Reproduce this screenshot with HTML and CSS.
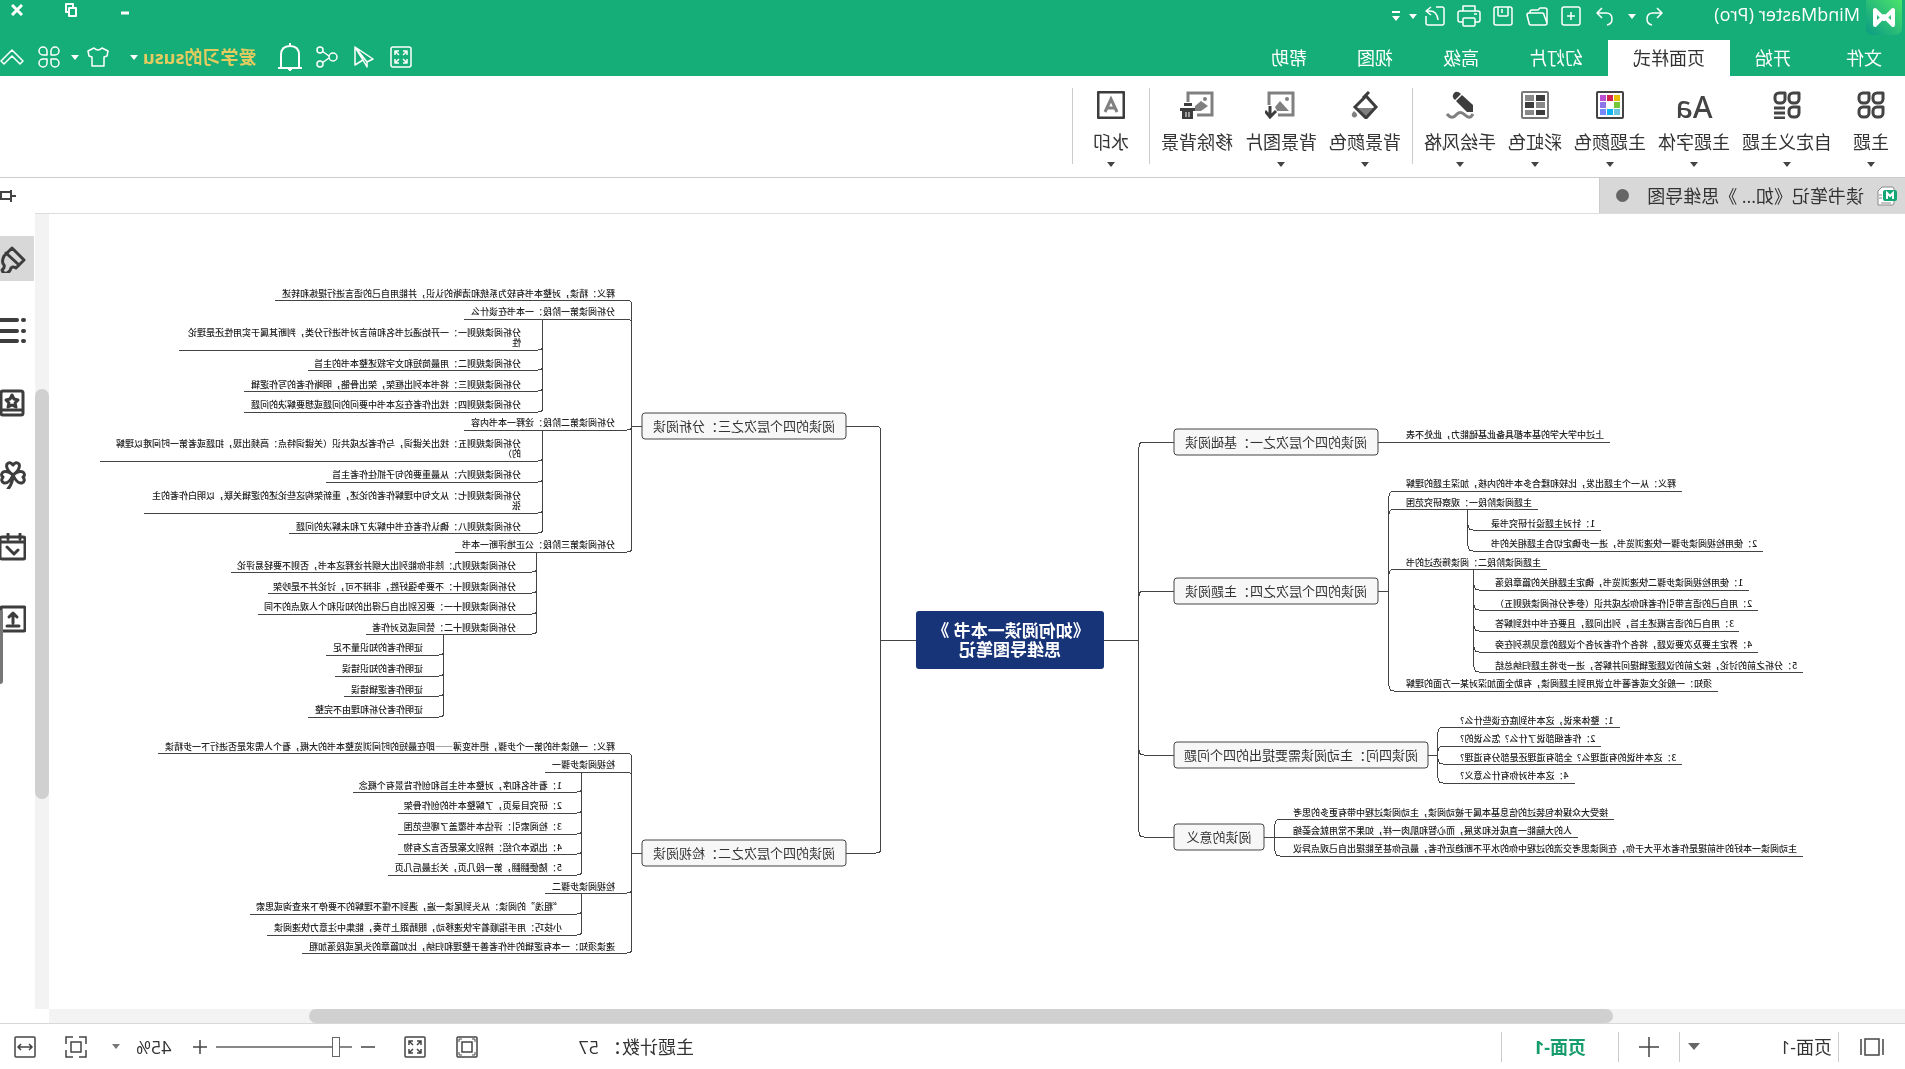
FILE: index.html
```html
<!DOCTYPE html>
<html lang="zh-CN">
<head>
<meta charset="utf-8">
<title>MindMaster (Pro)</title>
<link rel="stylesheet" href="styles.css">
</head>
<body>
<div class="app">
  <header class="header">
    <div class="titlebar">
      <svg class="logo" viewBox="0 0 36 36" aria-hidden="true">
        <defs><linearGradient id="lg" x1="0" y1="0" x2="1" y2="1"><stop offset="0" stop-color="#4be36c"/><stop offset="1" stop-color="#0a9a83"/></linearGradient></defs>
        <path d="M0 0H36V28a7 7 0 0 1-7 7H7a7 7 0 0 1-7-7Z" fill="url(#lg)"/>
        <path class="mark" d="M9 25V10l9 9 9-9v15l-9-9z"/>
      </svg>
      <h1 class="title">MindMaster (Pro)</h1>
      <div class="quick">
        <button class="tool" aria-label="撤销"><svg class="i20" viewBox="0 0 20 20"><path d="M7 2 2 7l5 5M2 7h9q6 0 6 6 0 5-5 6"/></svg></button>
        <button class="caret gap" aria-label="撤销历史"><svg viewBox="0 0 8 5"><path d="M0 0h8L4 5z"/></svg></button>
        <button class="tool" aria-label="重做"><svg class="i20" viewBox="0 0 20 20"><path d="M13 2l5 5-5 5M18 7H9q-6 0-6 6 0 5 5 6"/></svg></button>
        <button class="tool" aria-label="新建"><svg class="i20" viewBox="0 0 20 20"><rect x="1" y="1" width="18" height="18" rx="2"/><path d="M10 6v8M6 10h8"/></svg></button>
        <button class="tool" aria-label="打开"><svg class="i22" viewBox="0 0 22 20"><path d="M1 17V4q0-2 2-2h5l2 2h6q2 0 2 2v1M1 17 4 9q0-2 2-2h13q2 0 2 2l-2 8q0 2-2 2H3q-2 0-2-2Z"/></svg></button>
        <button class="tool" aria-label="保存"><svg class="i20" viewBox="0 0 20 20"><rect x="1" y="1" width="18" height="18" rx="2"/><path d="M5 1v8q0 1 1 1h8q1 0 1-1V1M11 3v4"/></svg></button>
        <button class="tool" aria-label="打印"><svg class="i24" viewBox="0 0 24 22"><path d="M6 6V1h12v5M6 17H3q-2 0-2-2V8q0-2 2-2h18q2 0 2 2v7q0 2-2 2h-3M4 9h3"/><rect x="6" y="13" width="12" height="8" rx="1"/></svg></button>
        <button class="tool" aria-label="导出"><svg class="i20" viewBox="0 0 20 20"><path d="M9 1H3Q1 1 1 3v14q0 2 2 2h14q2 0 2-2v-7M14 1l5 4-5 4M19 5h-4q-7 0-8 9"/></svg></button>
        <button class="caret" aria-label="导出选项"><svg viewBox="0 0 8 5"><path d="M0 0h8L4 5z"/></svg></button>
        <button class="more" aria-label="自定义快速访问"><svg viewBox="0 0 8 10"><path d="M0 0h8v2H0zM0 5h8L4 10z"/></svg></button>
      </div>
      <div class="window">
        <button aria-label="最小化"><svg width="10" height="20" viewBox="0 0 10 20"><path d="M1 13h8" stroke-width="3"/></svg></button>
        <button aria-label="还原"><svg width="12" height="14" viewBox="0 0 12 14"><path d="M1 5h7v8H1zM4 5V1h7v8H8" stroke-width="2"/></svg></button>
        <button aria-label="关闭"><svg width="12" height="12" viewBox="0 0 12 12"><path d="M1 1l10 10M11 1 1 11" stroke-width="3"/></svg></button>
      </div>
    </div>
    <div class="menubar">
      <nav class="tabs">
        <button class="tab first">文件</button>
        <button class="tab">开始</button>
        <button class="tab active">页面样式</button>
        <button class="tab">幻灯片</button>
        <button class="tab">高级</button>
        <button class="tab">视图</button>
        <button class="tab">帮助</button>
      </nav>
      <div class="account">
        <button class="act" aria-label="全屏"><svg class="i22" viewBox="0 0 22 22"><rect x="1" y="1" width="20" height="20" rx="2"/><path d="M9 9 5 5m0 4V5h4M13 9l4-4m-4 0h4v4M9 13l-4 4m0-4v4h4M13 13l4 4m-4 0h4v-4"/></svg></button>
        <button class="act" aria-label="发送"><svg class="i22" viewBox="0 0 22 22"><path d="M20 1 2 13l6 3zM20 1v18l-8-5zM8 16v5l4-7"/></svg></button>
        <button class="act" aria-label="分享"><svg class="i22" viewBox="0 0 22 22"><circle cx="5" cy="11" r="4"/><circle cx="18" cy="4" r="3"/><circle cx="18" cy="18" r="3"/><path d="M9 10l7-5M9 12l7 5"/></svg></button>
        <button class="act" aria-label="通知"><svg class="bell" viewBox="0 0 24 28"><path d="M3 24V12q0-9 9-9t9 9v12M0 25h24M12 0v3M12 25v3" stroke-width="2"/><path d="M10 26h4" stroke-width="2"/></svg></button>
        <a class="user" href="#">爱学习的susu</a>
        <button class="caret" aria-label="账户"><svg viewBox="0 0 8 5"><path d="M0 0h8L4 5z"/></svg></button>
        <button class="act skin" aria-label="皮肤"><svg class="i22" viewBox="0 0 22 20"><path d="M7 1q4 4 8 0l6 3-1 5-3 1v9H5v-9L2 9 1 4z"/></svg></button>
        <button class="caret" aria-label="皮肤选项"><svg viewBox="0 0 8 5"><path d="M0 0h8L4 5z"/></svg></button>
        <button class="act apps" aria-label="应用"><svg class="i22" viewBox="0 0 22 22"><path d="M9 9H5a4 4 0 1 1 4-4zM13 9h4a4 4 0 1 0-4-4zM9 13H5a4 4 0 1 0 4 4zM13 13h4a4 4 0 1 1-4 4z"/></svg></button>
        <button class="act fold" aria-label="收起功能区"><svg width="24" height="20" viewBox="0 0 24 20"><path d="M1 14 12 3l11 11-3 3-8-8-8 8z"/></svg></button>
      </div>
    </div>
  </header>

  <div class="ribbon">
    <button class="cmd wide"><svg class="i28" viewBox="0 0 28 28"><g class="s3"><path d="M2 2h6a4 4 0 0 1 4 4v2a4 4 0 0 1-4 4H6a4 4 0 0 1-4-4zM16 2h6a4 4 0 0 1 4 4v2a4 4 0 0 1-4 4h-2a4 4 0 0 1-4-4zM2 16h6a4 4 0 0 1 4 4v2a4 4 0 0 1-4 4H6a4 4 0 0 1-4-4zM16 16h6a4 4 0 0 1 4 4v2a4 4 0 0 1-4 4h-2a4 4 0 0 1-4-4z"/></g></svg><span>主题</span><i class="drop"></i></button>
    <button class="cmd"><svg class="i28" viewBox="0 0 28 28"><g class="s3"><path d="M2 2h6a4 4 0 0 1 4 4v2a4 4 0 0 1-4 4H6a4 4 0 0 1-4-4zM16 2h6a4 4 0 0 1 4 4v2a4 4 0 0 1-4 4h-2a4 4 0 0 1-4-4zM2 16h6a4 4 0 0 1 4 4v2a4 4 0 0 1-4 4H6a4 4 0 0 1-4-4z"/><path d="M16 17h11M16 22h11M16 27h11"/></g></svg><span>自定义主题</span><i class="drop"></i></button>
    <button class="cmd"><b class="aa">Aa</b><span>主题字体</span><i class="drop"></i></button>
    <button class="cmd"><svg class="i28" viewBox="0 0 28 28"><rect x="1" y="1" width="26" height="26" rx="1" fill="#fff" stroke="#444" stroke-width="2"/><path fill="#e8bd00" d="M4 4h6v6H4z"/><path fill="#cf2450" d="M11 4h6v6h-6z"/><path fill="#b94fd0" d="M18 4h6v6h-6z"/><path fill="#76c63c" d="M4 11h6v6H4z"/><path fill="#8d76ea" d="M18 11h6v6h-6z"/><path fill="#69c5dd" d="M4 18h6v6H4z"/><path fill="#10b4ee" d="M11 18h6v6h-6z"/><path fill="#7789ff" d="M18 18h6v6h-6z"/></svg><span>主题颜色</span><i class="drop"></i></button>
    <button class="cmd"><svg class="i28" viewBox="0 0 28 28"><rect x="1" y="1" width="26" height="26" rx="1" fill="#fff" stroke="#777" stroke-width="2"/><path fill="#3d3d3d" d="M4 4h9v6H4zM15 11h9v6h-9zM4 19h9v5H4z"/><path fill="#888" d="M15 4h9v6h-9zM4 11h9v6H4zM15 19h9v5h-9z"/></svg><span>彩虹色</span><i class="drop"></i></button>
    <button class="cmd"><svg class="i28" viewBox="0 0 28 28"><path fill="#3d3d3d" d="M1 14 12 4l6 6L7 21H1zM13 3q4-4 7-1 3 4-1 7z"/><path d="M1 23q3 6 8 1t9 0 9-1" fill="none" stroke="#808080" stroke-width="3"/></svg><span>手绘风格</span><i class="drop"></i></button>
    <hr class="sep">
    <button class="cmd"><svg class="i28" viewBox="0 0 28 28"><path fill="#808080" d="M5 17h16l-8 9z"/><path d="M13 5 24 16 13 27 3 16zM10 1l6 6" fill="none" stroke="#3d3d3d" stroke-width="3"/><path fill="#808080" d="M25 20q3 3 2 5-2 3-5 0-1-2 3-5z"/></svg><span>背景颜色</span><i class="drop"></i></button>
    <button class="cmd"><svg class="i32" viewBox="0 0 32 28"><g class="pic"><path d="M28 14V2H4v22h15"/></g><path fill="#808080" d="m8 20 9-10 5 6-2 4z"/><circle cx="10" cy="8" r="2" fill="#808080"/><path d="M27 15v11m-6-6 6 6 5-6" fill="none" stroke="#3d3d3d" stroke-width="3"/></svg><span>背景图片</span><i class="drop"></i></button>
    <button class="cmd"><svg class="i34" viewBox="0 0 34 28"><g class="pic"><path d="M26 11V2H2v22h15"/></g><path fill="#808080" d="m6 15 7-5 6 5v5h-6z"/><circle cx="9" cy="8" r="2" fill="#808080"/><path fill="#3d3d3d" d="M22 12h8v3H22zM19 17h15v3H19zM21 20h11v8H21z"/><path stroke="#fff" d="M25 21v5M28 21v5"/></svg><span>移除背景</span><i class="drop none"></i></button>
    <hr class="sep">
    <button class="cmd wide"><svg class="i28" viewBox="0 0 28 28"><rect x="1" y="1" width="26" height="26" rx="2" fill="none" stroke="#3d3d3d" stroke-width="3"/><path d="m8 21 6-13 6 13M10 17h8" fill="none" stroke="#808080" stroke-width="3"/></svg><span>水印</span><i class="drop"></i></button>
    <hr class="sep">
  </div>

  <main class="work">
    <div class="docs">
      <div class="doc">
        <svg class="docicon" viewBox="0 0 20 20" aria-hidden="true"><path d="M5 1h10l4 4v14H5q-2 0-2-2V3q0-2 2-2z" fill="#fff" stroke="#888"/><path d="M6 17h10M15 9h3M15 12h3" stroke="#888" fill="none"/><rect x="0" y="4" width="14" height="11" rx="2" fill="#12a873"/><path d="M4 13V7l3 3 3-3v6" fill="none" stroke="#fff" stroke-width="2"/></svg>
        <span>读书笔记《如... 》思维导图</span>
        <i class="dirty"></i>
      </div>
    </div>
    <button class="pin" aria-label="固定面板"><svg width="16" height="12" viewBox="0 0 16 12"><path d="M0 6h4M5 0v12M5 2h10v7H5M5 9h11" fill="none" stroke="#444" stroke-width="2"/></svg></button>

    <section class="canvas" aria-label="思维导图">
      <svg class="map" viewBox="0 214 1856 795">
        <g class="lines">
          <path d="M766 640H801M989 640H1024"/>
          <path d="M1059 426H1029q-5 0-5 5V848q0 5 5 5H1059"/>
          <path d="M731 442H761q5 0 5 5V832q0 5-5 5H731M731 591H761q5 0 5 5M731 755H761q5 0 5-5"/>

          <path d="M1263 426H1273M1630 300H1278q-5 0-5 5V547q0 5 5 5H1450M1441 319H1278q-5 0-5 5M1441 430H1278q-5 0-5-5"/>
          <path d="M1362 319V407q0 5 5 5H1661M1726 350H1367q-5 0-5-5M1597 370H1367q-5 0-5-5M1661 391H1367q-5 0-5-5"/>
          <path d="M1362 430V528q0 5 5 5H1616M1805 461H1367q-5 0-5-5M1579 482H1367q-5 0-5-5M1761 513H1367q-5 0-5-5"/>
          <path d="M1368 552V629q0 5 5 5H1539M1674 572H1373q-5 0-5-5M1637 593H1373q-5 0-5-5M1647 614H1373q-5 0-5-5"/>
          <path d="M1461 634V712q0 5 5 5H1597M1579 655H1466q-5 0-5-5M1570 676H1466q-5 0-5-5M1561 696H1466q-5 0-5-5"/>

          <path d="M1263 853H1273M1747 753H1278q-5 0-5 5V948q0 5 5 5H1603M1360 772H1278q-5 0-5 5M1360 893H1278q-5 0-5-5"/>
          <path d="M1323 772V870q0 5 5 5H1517M1552 792H1328q-5 0-5-5M1507 813H1328q-5 0-5-5M1507 834H1328q-5 0-5-5M1507 854H1328q-5 0-5-5"/>
          <path d="M1323 893V930q0 5 5 5H1638M1655 914H1328q-5 0-5-5"/>

          <path d="M527 442H295"/>
          <path d="M527 591H516M223 491H511q5 0 5 5V686q0 5-5 5H187M367 509H511q5 0 5 5M358 569H511q5 0 5 5"/>
          <path d="M437 509V546q0 5-5 5H142M304 530H432q5 0 5-5"/>
          <path d="M431 569V667q0 5-5 5H102M156 590H426q5 0 5-5M147 610H426q5 0 5-5M166 631H426q5 0 5-5M147 652H426q5 0 5-5"/>
          <path d="M477 755H467M285 727H462q5 0 5 5V778q0 5-5 5H330M304 746H462q5 0 5 5M223 764H462q5 0 5-5"/>
          <path d="M641 837H327M291 819H625q5 0 5 5V851q0 5-5 5H102"/>
        </g>
        <rect class="core" x="801" y="611" width="188" height="58" rx="3"/>
        <g class="coretext"><text x="894" y="637">《如何阅读一本书 》</text><text x="895" y="656">思维导图笔记</text></g>
        <g class="boxes">
          <rect x="1059" y="413" width="204" height="26" rx="3"/><rect x="1059" y="840" width="204" height="26" rx="3"/>
          <rect x="527" y="429" width="204" height="26" rx="3"/><rect x="527" y="578" width="204" height="26" rx="3"/>
          <rect x="477" y="742" width="254" height="26" rx="3"/><rect x="641" y="824" width="90" height="26" rx="3"/>
        </g>
        <g class="topics">
          <text x="1161" y="431">阅读的四个层次之三：分析阅读</text>
          <text x="1161" y="858">阅读的四个层次之二：检视阅读</text>
          <text x="629" y="447">阅读的四个层次之一：基础阅读</text>
          <text x="629" y="596">阅读的四个层次之四：主题阅读</text>
          <text x="604" y="760">阅读四问：主动阅读需要提出的四个问题</text>
          <text x="686" y="842">阅读的意义</text>
        </g>
        <g class="leaves">
          <text x="1290" y="297">释义：精读，对整本书有较为系统和清晰的认识，并能用自己的语言进行提炼和转述</text>
          <text x="1290" y="315">分析阅读第一阶段：一本书在谈什么</text>
          <text x="1384" y="336">分析阅读规则一：一开始通过书名和前言对书进行分类，判断其属于实用性还是理论</text>
          <text x="1384" y="346">性</text>
          <text x="1384" y="367">分析阅读规则二：用最简短和文字叙述整本书的主旨</text>
          <text x="1384" y="388">分析阅读规则三：将书本列出框架，架出骨骼，明晰作者的写作逻辑</text>
          <text x="1384" y="408">分析阅读规则四：找出作者在这本书中要问的问题或想要解决的问题</text>
          <text x="1290" y="426">分析阅读第二阶段：诠释一本书内容</text>
          <text x="1384" y="447">分析阅读规则五：找出关键词，与作者达成共识（关键词特点：高频出现，扣题或者第一时间难以理解</text>
          <text x="1384" y="457">的）</text>
          <text x="1384" y="478">分析阅读规则六：从最重要的句子抓住作者主旨</text>
          <text x="1384" y="499">分析阅读规则七：从文句中理解作者的论述，重新架构这些论述的逻辑关联，以明白作者的主</text>
          <text x="1384" y="509">张</text>
          <text x="1384" y="530">分析阅读规则八：确认作者在书中解决了和未解决的问题</text>
          <text x="1290" y="548">分析阅读第三阶段：公正地评断一本书</text>
          <text x="1389" y="569">分析阅读规则九：除非你能列出大纲并诠释这本书，否则不要轻易评论</text>
          <text x="1389" y="590">分析阅读规则十：不要争强好胜，非辩不可，讨论并不是吵架</text>
          <text x="1389" y="610">分析阅读规则十一：要区别出自己得出的知识和个人观点的不同</text>
          <text x="1389" y="631">分析阅读规则十二：赞同或反对作者</text>
          <text x="1482" y="651">证明作者的知识量不足</text>
          <text x="1482" y="672">证明作者的知识错误</text>
          <text x="1482" y="693">证明作者逻辑错误</text>
          <text x="1482" y="713">证明作者分析和理由不完整</text>

          <text x="1290" y="750">释义：一般读书的第一个步骤，把书变薄——即在最短的时间浏览整本书的大概，看个人需求是否进行下一步精读</text>
          <text x="1290" y="768">检视阅读步骤一</text>
          <text x="1343" y="789">1：看书名和序，对整本书主旨和创作背景有个概念</text>
          <text x="1343" y="809">2：研究目录页，了解整本书的创作骨架</text>
          <text x="1343" y="830">3：检阅索引：评估本书覆盖了哪些范围</text>
          <text x="1343" y="851">4：出版本介绍：辨别文案是否言之有物</text>
          <text x="1343" y="871">5：随便翻翻，第一段几页，关注最后几页</text>
          <text x="1290" y="890">检视阅读步骤二</text>
          <text x="1343" y="910">“粗浅”的阅读：从头到尾读一遍，遇到不懂不理解的不要停下来查询或思索</text>
          <text x="1343" y="931">小技巧：用手指顺着字快速移动，眼睛跟上节奏，能集中注意力快速阅读</text>
          <text x="1290" y="950">速读须知：一本有逻辑的书作者善于整理和归纳，比如篇章的头尾或段落加粗</text>
        </g>
        <g class="leaves end">
          <text x="499" y="438">上过中学大学的基本都具备此基础能力，此处不表</text>
          <text x="499" y="487">释义：从一个主题出发，比较和糅合多本书的内核，加深主题的理解</text>
          <text x="499" y="506">主题阅读阶段一：观察研究范围</text>
          <text x="414" y="527">1：针对主题设计研究书录</text>
          <text x="414" y="547">2：使用检视阅读步骤一快速浏览书，进一步确定切合主题相关的书</text>
          <text x="499" y="566">主题阅读阶段二：阅读筛选过的书</text>
          <text x="410" y="586">1：使用检视阅读步骤二快速浏览书，确定主题相关的篇章段落</text>
          <text x="410" y="607">2：用自己的语言带引作者和你达成共识（参考分析阅读规则五）</text>
          <text x="410" y="627">3：用自己的语言概述主旨，列出问题，且要在书中找到解答</text>
          <text x="410" y="648">4：界定主要及次要议题，将各个作者对各个议题的意见陈列在旁</text>
          <text x="410" y="669">5：分析之前的讨论，按之前的议题逻辑提问并解答，进一步将主题归纳总结</text>
          <text x="499" y="687">须知：一般论文或者著书立说用到主题阅读，有助全面加深对某一方面的理解</text>
          <text x="445" y="724">1：整体来说，这本书到底在谈些什么?</text>
          <text x="445" y="742">2：作者细部说了什么？怎么说的?</text>
          <text x="445" y="761">3：这本书说的有道理么？全部有道理还是部分有道理?</text>
          <text x="445" y="779">4：这本书对你有什么意义?</text>
          <text x="612" y="816">接受大众媒体包装过的信息基本属于被动阅读，主动阅读过程中带有更多的思考</text>
          <text x="612" y="834">人的大脑能一直成长和发展，而心智和肌肉一样，如果不常用就会萎缩</text>
          <text x="612" y="852">主动阅读一本好的书前提是作者水平大于你，在阅读思考交流的过程中你的水平不断趋近作者，最后你甚至能提出自己观点异议</text>
        </g>
      </svg>
    </section>
    <div class="vscroll"><div class="vthumb"></div></div>
    <aside class="side">
      <button class="panel active" aria-label="样式"><svg viewBox="0 0 26 28"><path d="M14 3 2 15l8 8M14 3l8 8M20 8 7 20M10 23q3-2 5 0 1 4 4 5 4 1 5-3-3-2-2-5 3-3 0-9"/></svg></button>
      <button class="panel" aria-label="大纲"><svg viewBox="0 0 26 28"><path d="M2 3h1M2 14h1M2 24h1M9 3h18M9 14h18M9 24h18" stroke-width="4"/></svg></button>
      <button class="panel" aria-label="图标"><svg viewBox="0 0 26 28"><path d="M3 24V4q0-2 2-2h18q2 0 2 2v20q0 2-2 2H5q-2 0-2-2zM3 21h22"/><path d="m14 6 2 4 4 1-3 3 1 4-4-2-4 2 1-4-3-3 4-1z"/></svg></button>
      <button class="panel" aria-label="剪贴画"><svg viewBox="0 0 26 28"><path d="M13 14Q5 8 7 3q3-3 6 1 3-4 6-1 2 5-6 11zM13 14Q7 9 3 11q-3 3 0 5-3 4 1 6 5 1 9-8zM13 14q6-5 10-3 3 3 0 5 3 4-1 6-5 1-9-8zM13 14q0 8 5 14"/></svg></button>
      <button class="panel" aria-label="任务"><svg viewBox="0 0 26 28"><path d="M1 9V6q0-2 2-2h21q2 0 2 2v18q0 2-2 2H3q-2 0-2-2V9h25M6 1v5M18 1v5M8 17l4 4 7-7"/></svg></button>
      <button class="panel" aria-label="上传"><svg viewBox="0 0 26 28"><rect x="1" y="2" width="24" height="24" rx="1"/><path d="M7 21h12M13 18V9M9 12l4-4 4 4"/></svg></button>
      <div class="sidethumb"></div>
    </aside>
    <div class="hscroll"><div class="hthumb"></div></div>
  </main>

  <footer class="footer">
    <button class="pages" aria-label="页面列表"><svg width="24" height="18" viewBox="0 0 24 18"><path d="M1 1v16M23 1v16M5 1h14v16H5z"/></svg></button>
    <hr class="fsep">
    <label class="pagepick"><select aria-label="页面"><option>页面-1</option></select><i class="pickarrow"></i></label>
    <hr class="fsep">
    <button class="add" aria-label="添加页面"><svg width="20" height="20" viewBox="0 0 20 20"><path d="M10 0v20M0 10h20"/></svg></button>
    <hr class="fsep">
    <button class="current">页面-1</button>
    <hr class="fsep">
    <div class="status">
      <p class="count"><span>主题计数：</span><span>57</span></p>
      <button class="fbtn" aria-label="适合主题"><svg width="22" height="22" viewBox="0 0 22 22"><rect x="1" y="1" width="20" height="20" rx="1"/><rect x="6" y="6" width="10" height="10"/><path d="M3 6V3h3M16 3h3v3M3 16v3h3M16 19h3v-3" stroke-width="1"/></svg></button>
      <button class="fbtn" aria-label="全屏显示"><svg width="22" height="22" viewBox="0 0 22 22"><rect x="1" y="1" width="20" height="20" rx="1"/><path d="M9 9 5 5m0 4V5h4M13 9l4-4m-4 0h4v4M9 13l-4 4m0-4v4h4M13 13l4 4m-4 0h4v-4"/></svg></button>
      <div class="zoom">
        <button aria-label="缩小"><svg width="14" height="14" viewBox="0 0 14 14"><path d="M0 7h14"/></svg></button>
        <input class="slider" type="range" min="0" max="100" value="10" aria-label="缩放">
        <button aria-label="放大"><svg width="14" height="14" viewBox="0 0 14 14"><path d="M0 7h14M7 0v14"/></svg></button>
      </div>
      <span class="percent">45%</span>
      <button class="caret grey" aria-label="缩放比例"><svg viewBox="0 0 8 5"><path d="M0 0h8L4 5z"/></svg></button>
      <button class="fbtn" aria-label="适合页面"><svg width="22" height="22" viewBox="0 0 22 22"><path d="M1 8V1h7M14 1h7v7M1 14v7h7M14 21h7v-7"/><rect x="6" y="6" width="10" height="10"/></svg></button>
      <button class="fbtn last" aria-label="适合宽度"><svg width="22" height="22" viewBox="0 0 22 22"><rect x="1" y="1" width="20" height="20" rx="1"/><path d="M4 11h14M7 8l-3 3 3 3M15 8l3 3-3 3"/></svg></button>
    </div>
  </footer>
</div>
</body>
</html>
```
FILE: styles.css
```css
* { box-sizing: border-box; }

body {
  margin: 0;
  background: #fff;
  color: #333;
  font: 18px/24px "Open Sans", "Noto Sans CJK SC", sans-serif;
}

button, select {
  margin: 0;
  padding: 0;
  border: 0;
  background: none;
  color: inherit;
  font: inherit;
}

button { display: flex; align-items: center; justify-content: center; flex: none; }
svg { display: block; flex: none; }
hr { margin: 0; border: 0; }

/* The whole window is shown left-right reversed. */
.app {
  display: flex;
  flex-direction: column;
  min-height: 100vh;
  transform: scaleX(-1);
}

/* Header */
.header { background: #16ae78; color: #fff; }
.header svg { fill: none; stroke: #fff; stroke-width: 1.5; stroke-linejoin: round; }
.titlebar { display: flex; height: 40px; align-items: flex-start; }
.logo { width: 36px; height: 36px; margin-left: 3px; }
.header .logo { stroke: none; }
.logo .mark { fill: none; stroke: #fff; stroke-width: 4; }
.title { width: 189px; margin: 0 0 0 6px; font-size: 18px; line-height: 28px; font-weight: 400; white-space: nowrap; }
.quick { display: flex; height: 32px; align-items: center; }
.tool { width: 34px; height: 32px; }
.caret { width: 10px; height: 24px; }
.caret svg, .header .caret svg { width: 8px; height: 5px; fill: #fff; stroke: none; }
.caret.gap { margin-right: 5px; }
.more { width: 24px; height: 24px; }
.header .more svg { width: 8px; height: 10px; fill: #fff; stroke: none; }
.window { display: flex; gap: 20px; margin-left: auto; }
.window button { width: 34px; height: 20px; }

.i20 { width: 20px; height: 20px; }
.i22 { width: 22px; height: 22px; }
.i24 { width: 24px; height: 22px; }
.i28 { width: 28px; height: 28px; }
.i32 { width: 32px; height: 28px; }
.i34 { width: 34px; height: 28px; }
.bell { width: 24px; height: 28px; }

.menubar { display: flex; height: 36px; }
.tabs { display: flex; }
.tab { padding: 0 25px; }
.tab.first { padding: 0 30px 0 23px; }
.tab.active { background: #fff; color: #333; }
.account { display: flex; align-items: center; margin-left: auto; padding-bottom: 2px; }
.act { width: 37px; height: 32px; }
.user { margin: 0 4px 0 15px; color: #e6cb5f; font-weight: 700; text-decoration: none; white-space: nowrap; }
.skin { margin-left: 12px; }
.act.apps { width: 32px; margin: 0 9px 0 5px; }
.act.fold { width: 24px; }

/* Ribbon */
.ribbon { display: flex; height: 102px; padding: 12px 0 0 1px; border-bottom: 1px solid #ccc; }
.cmd { flex-direction: column; justify-content: flex-start; padding: 3px 6px 0; }
.cmd.wide { padding: 3px 15px 0; }
.cmd span { margin: 10px 0 7px; line-height: 26px; white-space: nowrap; }
.s3 { fill: none; stroke: #444; stroke-width: 3; stroke-linejoin: round; }
.pic { fill: none; stroke: #808080; stroke-width: 3; }
.aa { height: 28px; font: 500 30px/32px "Noto Sans", sans-serif; color: #444; }
.drop { border: 4px solid transparent; border-top: 5px solid #444; border-bottom: 0; }
.drop.none { visibility: hidden; }
.sep { width: 1px; height: 76px; margin: 0 5px; background: #ccc; }

/* Work area */
.work {
  display: grid;
  flex: 1;
  grid-template-columns: minmax(0, 1fr) 14px 35px;
  grid-template-rows: 36px 1fr 14px;
}
.docs { grid-column: 1 / 3; display: flex; border-bottom: 1px solid #ddd; }
.doc { display: flex; align-items: center; width: 306px; padding-left: 8px; background: #d8d8d8; border-right: 1px solid #ccc; white-space: nowrap; }
.docicon { width: 20px; height: 20px; margin-right: 13px; }
.dirty { width: 13px; height: 13px; margin-left: auto; margin-right: 16px; border-radius: 50%; background: #666; }
.pin { justify-content: flex-end; }
.canvas { display: flex; justify-content: center; overflow: hidden; }
.vscroll { background: #f3f3f3; padding-top: 175px; }
.vthumb { height: 410px; border-radius: 7px; background: #d0d0d0; }
.hscroll { background: #f3f3f3; grid-column: 1; padding: 0 260px 0 292px; }
.hthumb { height: 14px; border-radius: 7px; background: #d0d0d0; }

.side { position: relative; display: flex; flex-direction: column; gap: 27px; padding: 22px 0 0 1px; overflow: hidden; }
.panel { width: 34px; height: 45px; }
.panel.active { background: #d8d8d8; }
.panel svg { width: 26px; height: 28px; margin-left: 8px; fill: none; stroke: #3d3d3d; stroke-width: 3; stroke-linejoin: round; stroke-linecap: round; }
.sidethumb { position: absolute; right: 0; top: 396px; width: 3px; height: 74px; border-radius: 3px 0 0 3px; background: #777; }

/* Mind map */
.map { width: 1856px; height: 795px; }
.lines { fill: none; stroke: #444; stroke-width: 1; shape-rendering: crispEdges; }
.boxes { fill: #f7f7f7; stroke: #444; }
.core { fill: #183478; }
.coretext { fill: #fff; font-size: 17px; font-weight: 700; text-anchor: middle; }
.topics { fill: #333; font-size: 13px; text-anchor: middle; }
.leaves { fill: #222; font: 500 9px "Noto Sans CJK SC", sans-serif; }
.end { text-anchor: end; }

/* Footer */
.footer { display: flex; align-items: center; height: 46px; border-top: 1px solid #d8d8d8; }
.footer svg { fill: none; stroke: #444; stroke-width: 1.5; }
.fsep { width: 1px; height: 30px; background: #ccc; }
.pages { width: 66px; height: 30px; }
.pagepick { display: flex; align-items: center; width: 158px; }
.pagepick select { flex: 1; height: 30px; padding-left: 6px; appearance: none; }
.pickarrow { margin-right: 8px; border: 6px solid transparent; border-top: 7px solid #666; border-bottom: 0; }
.add { width: 60px; height: 30px; }
.current { width: 116px; height: 30px; color: #179c6c; font-weight: 700; }
.status { display: flex; align-items: center; margin-left: auto; }
.count { display: flex; gap: 5px; margin: 0 85px 0 0; }
.fbtn { width: 52px; height: 30px; }
.zoom { display: flex; align-items: center; gap: 9px; margin-left: 14px; }
.slider { width: 136px; height: 22px; margin: 0; appearance: none; background: linear-gradient(#888, #888) center / 100% 2px no-repeat; }
.slider::-webkit-slider-thumb { appearance: none; width: 8px; height: 20px; border: 1px solid #666; background: #fff; }
.percent { margin: 0 15px 0 22px; }
.footer .caret svg { fill: #777; stroke: none; }
.footer .caret { margin-right: 9px; }
.fbtn.last { width: 50px; }
```
